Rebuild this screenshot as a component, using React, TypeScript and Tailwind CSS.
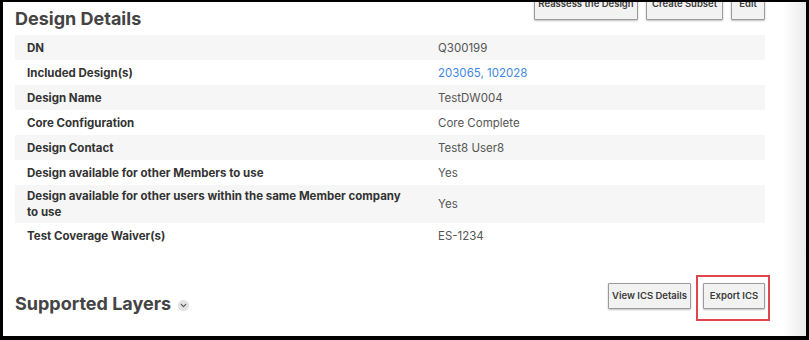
import { ChevronDown } from 'lucide-react';

const rows: { label: string; value: string; link?: boolean }[] = [
  { label: 'DN', value: 'Q300199' },
  { label: 'Included Design(s)', value: '203065, 102028', link: true },
  { label: 'Design Name', value: 'TestDW004' },
  { label: 'Core Configuration', value: 'Core Complete' },
  { label: 'Design Contact', value: 'Test8 User8' },
  { label: 'Design available for other Members to use', value: 'Yes' },
  { label: 'Design available for other users within the same Member company to use', value: 'Yes' },
  { label: 'Test Coverage Waiver(s)', value: 'ES-1234' },
];

function Btn({ children, className = '' }: { children: React.ReactNode; className?: string }) {
  return (
    <button
      className={`px-0 bg-[#f2f2f2] border border-[#9a9a9a] rounded-[1px] shadow-[0_1px_2px_rgba(0,0,0,0.25)] text-[9.5px] font-semibold text-[#3a3a3a] whitespace-nowrap ${className}`}
    >
      {children}
    </button>
  );
}

export default function App() {
  return (
    <div className="w-[809px] h-[340px] bg-black pt-[2px] pl-[3px] pr-[3px] pb-[4px] font-['Inter',sans-serif]">
      <div className="relative h-full bg-white overflow-hidden pl-[12px] pr-[41px] bg-gradient-to-r from-white from-[97%] to-[#ececec]">
        <div className="flex items-start justify-between">
          <h2 className="mt-[5px] text-[18px] font-bold text-[#444] leading-[24px]">Design Details</h2>
          <div className="flex gap-2 -mt-[14px]">
            <Btn className="w-[104px] h-[32px]">Reassess the Design</Btn>
            <Btn className="w-[77px] h-[32px]">Create Subset</Btn>
            <Btn className="w-[34px] h-[32px]">Edit</Btn>
          </div>
        </div>

        <div className="mt-[4px]">
          {rows.map((r, i) => (
            <div
              key={r.label}
              className={`grid grid-cols-[411px_1fr] min-h-[25px] items-center ${i % 2 === 0 ? 'bg-[#f6f6f6]' : 'bg-white'}`}
            >
              <div className="pl-[12px] pr-[12px] py-[3px] text-[11.5px] font-bold text-[#333] leading-[16px]">
                {r.label}
              </div>
              <div className={`pl-[12px] text-[11.5px] leading-[16px] ${r.link ? 'text-[#3f87e0]' : 'text-[#555]'}`}>
                {r.value}
              </div>
            </div>
          ))}
        </div>

        <div className="mt-[28px] flex items-center justify-between">
          <div className="flex items-center gap-[7px] mt-[16px]">
            <h2 className="text-[18px] font-bold text-[#444] leading-[24px]">Supported Layers</h2>
            <span className="w-[11px] h-[11px] rounded-full bg-[#e2e2e2] flex items-center justify-center mt-[3px]">
              <ChevronDown size={9} strokeWidth={3} className="text-[#555]" />
            </span>
          </div>
          <div className="flex gap-3">
            <Btn className="w-[83px] h-[26px]">View ICS Details</Btn>
            <Btn className="w-[62px] h-[26px]">Export ICS</Btn>
          </div>
        </div>

        <div className="absolute left-[693px] top-[273px] w-[74px] h-[46px] border-2 border-[#e0474c]" />
      </div>
    </div>
  );
}
